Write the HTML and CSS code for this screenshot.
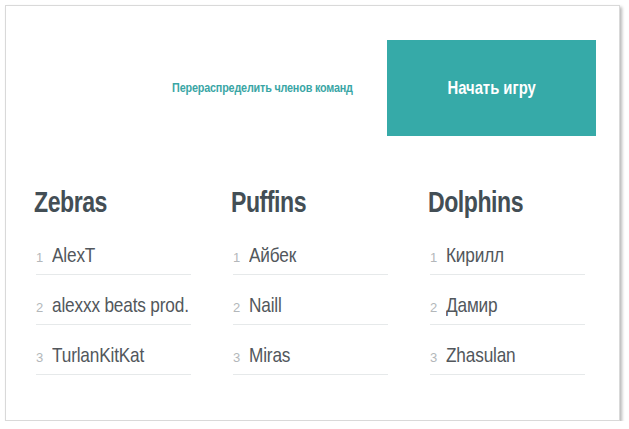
FILE: index.html
```html
<!DOCTYPE html>
<html lang="ru">
<head>
  <meta charset="utf-8" />
  <meta name="viewport" content="width=device-width, initial-scale=1" />
  <title>Команды</title>
  <link rel="stylesheet" href="styles.css">
</head>
<body>
  <section class="card">
    <div class="actions">
      <a class="reshuffle" href="#"><span class="squeeze">Перераспределить членов команд</span></a>
      <button class="start"><span class="squeeze">Начать игру</span></button>
    </div>

    <div class="teams">
      <div class="team">
        <h2><span class="squeeze">Zebras</span></h2>
        <ol class="members">
          <li><span class="num">1</span><span class="name">AlexT</span></li>
          <li><span class="num">2</span><span class="name">alexxx beats prod.</span></li>
          <li><span class="num">3</span><span class="name">TurlanKitKat</span></li>
        </ol>
      </div>
      <div class="team">
        <h2><span class="squeeze">Puffins</span></h2>
        <ol class="members">
          <li><span class="num">1</span><span class="name">Айбек</span></li>
          <li><span class="num">2</span><span class="name">Naill</span></li>
          <li><span class="num">3</span><span class="name">Miras</span></li>
        </ol>
      </div>
      <div class="team">
        <h2><span class="squeeze">Dolphins</span></h2>
        <ol class="members">
          <li><span class="num">1</span><span class="name">Кирилл</span></li>
          <li><span class="num">2</span><span class="name">Дамир</span></li>
          <li><span class="num">3</span><span class="name">Zhasulan</span></li>
        </ol>
      </div>
    </div>
  </section>
</body>
</html>
```

FILE: styles.css
```css
body { margin: 0; background: #fff; font-family: "Liberation Sans", Arial, sans-serif; color: #4a4f55; }

.card { box-sizing: border-box; width: 615px; height: 416px; margin: 5px 0 0 5px; border: 1px solid #d9d9d9; box-shadow: 2px 2px 3px rgba(0,0,0,.28); background: #fff; padding: 34px 23px 0 28px; }

/* the design font is a condensed face; squeeze the text horizontally */
.squeeze { display: inline-block; white-space: nowrap; }

.actions { display: flex; justify-content: flex-end; align-items: center; gap: 34px; }
.reshuffle { color: #3aa6a5; font-size: 12px; font-weight: 700; text-decoration: none; letter-spacing: -.2px; }
.reshuffle .squeeze { transform: scaleX(.9); transform-origin: right center; }
.start { width: 209px; height: 96px; border: 0; background: #36aaa8; color: #fff; font-family: inherit; font-size: 19px; font-weight: 700; cursor: pointer; }
.start .squeeze { transform: scaleX(.78); }

.teams { display: grid; grid-template-columns: repeat(3, 197px); margin-top: 48px; }
.team h2 { margin: 0 0 5px; font-size: 30px; line-height: 36px; font-weight: 700; color: #434e55; letter-spacing: -.6px; }
.team h2 .squeeze { transform: scaleX(.77); transform-origin: left center; }

.members { list-style: none; margin: 0; padding: 0 0 0 2px; width: 155px; }
.members li { display: flex; align-items: baseline; box-sizing: border-box; height: 50px; padding-top: 16px; line-height: 28px; border-bottom: 1px solid #e6e9ea; }
.num { flex: none; width: 16px; font-size: 13px; color: #b3b7ba; }
.name { display: inline-block; font-size: 21px; color: #52575c; white-space: nowrap; letter-spacing: -.2px; transform: scaleX(.82); transform-origin: left center; }
```
